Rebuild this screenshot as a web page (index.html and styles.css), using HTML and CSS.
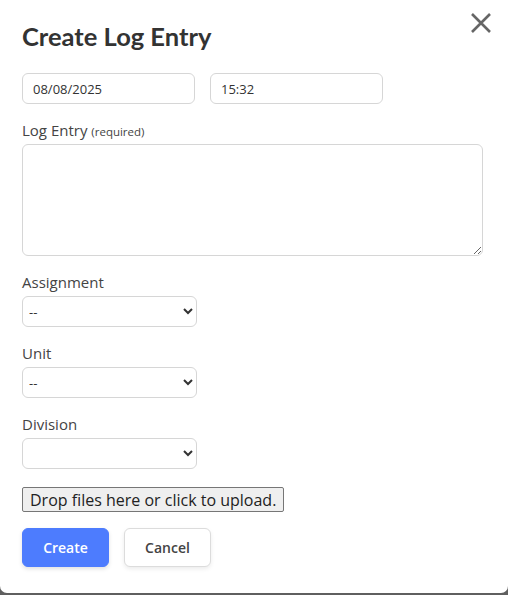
FILE: index.html
```html
<!DOCTYPE html>
<html lang="en">
<head>
    <meta charset="UTF-8">
    <meta name="viewport" content="width=device-width, initial-scale=1.0">
    <title>Create Log Entry</title>
    <link rel="stylesheet" href="styles.css">
</head>
<body>
    <div class="modal">
        <div class="modal-header">
            <h2>Create Log Entry</h2>
            <button class="close-btn" type="button" aria-label="Close">
                <svg width="20" height="20" viewBox="0 0 20 20">
                    <path d="M1 1 L19 19 M19 1 L1 19" stroke="#666" stroke-width="2.6" fill="none"/>
                </svg>
            </button>
        </div>
        <form id="logForm">
            <div class="field date-row">
                <input type="text" value="08/08/2025" />
                <input type="text" value="15:32" />
            </div>
            <div class="field">
                <label for="logEntry">Log Entry <small>(required)</small></label>
                <textarea id="logEntry"></textarea>
            </div>
            <div class="field">
                <label for="assignment">Assignment</label>
                <select id="assignment"><option>--</option></select>
            </div>
            <div class="field">
                <label for="unit">Unit</label>
                <select id="unit"><option>--</option></select>
            </div>
            <div class="field">
                <label for="division">Division</label>
                <select id="division"><option></option></select>
            </div>
            <div class="field">
                <button type="button" class="upload-btn">Drop files here or click to upload.</button>
            </div>
            <div class="actions">
                <button type="submit" class="btn btn-primary">Create</button>
                <button type="button" class="btn btn-secondary">Cancel</button>
            </div>
        </form>
    </div>
</body>
</html>
```

FILE: styles.css
```css
* {
    box-sizing: border-box;
    margin: 0;
    padding: 0;
}

body {
    background: #5f5f5f;
    font-family: 'Open Sans', sans-serif;
    color: #444;
}

.modal {
    background: #fff;
    width: 508px;
    height: 593px;
    border-radius: 0 0 7px 7px;
    padding: 21px 25px 25px 22px;
}

.modal-header {
    display: flex;
    justify-content: space-between;
    align-items: flex-start;
    margin-bottom: 22px;
}

.modal-header h2 {
    font-family: 'Lato', sans-serif;
    font-weight: bold;
    font-size: 25.5px;
    line-height: 30px;
    color: #333;
}

.close-btn {
    background: none;
    border: none;
    margin-top: -8px;
    margin-right: -8px;
    width: 20px;
    height: 20px;
}

.field {
    margin-bottom: 16px;
}

.date-row {
    display: flex;
    gap: 15px;
}

.date-row input {
    width: 173px;
    height: 31px;
    border: 1px solid #d6d6d6;
    border-radius: 6px;
    padding: 0 10px;
    font-family: 'Open Sans', sans-serif;
    font-size: 13px;
    color: #333;
}

label {
    display: block;
    font-size: 15px;
    line-height: 20px;
    margin-bottom: 4px;
    color: #444;
}

label small {
    font-size: 11.5px;
    line-height: 1;
    color: #444;
}

textarea {
    display: block;
    width: 461px;
    height: 112px;
    border: 1px solid #d6d6d6;
    border-radius: 6px;
    padding: 6px 10px;
    font-family: 'Open Sans', sans-serif;
    font-size: 13px;
}

select {
    display: block;
    width: 175px;
    height: 31px;
    border: 1px solid #d6d6d6;
    border-radius: 6px;
    padding: 0 2px;
    background: #fff;
    font-family: 'Open Sans', sans-serif;
    font-size: 13px;
    color: #333;
}

.upload-btn {
    display: block;
    margin-top: 18px;
    height: 25px;
    padding: 0 7px;
    background: #efefef;
    border: 1px solid #767676;
    border-radius: 2px;
    font-family: 'Open Sans', sans-serif;
    font-size: 16px;
    color: #222;
}

.actions {
    display: flex;
    gap: 15px;
    margin-top: 2px;
}

.btn {
    width: 87px;
    height: 39px;
    border-radius: 6px;
    font-family: 'Open Sans', sans-serif;
    font-weight: 600;
    font-size: 14px;
}

.btn-primary {
    background: #4d7cfe;
    border: 1px solid #4d7cfe;
    color: #fff;
    box-shadow: 0 2px 4px rgba(0, 0, 0, 0.12);
}

.btn-secondary {
    background: #fff;
    border: 1px solid #dcdcdc;
    color: #444;
    box-shadow: 0 2px 4px rgba(0, 0, 0, 0.08);
}
```
